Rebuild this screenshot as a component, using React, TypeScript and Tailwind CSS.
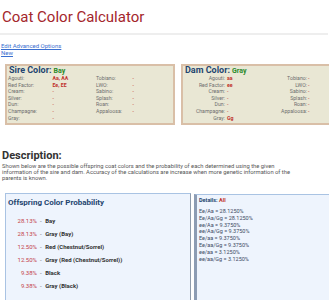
import React from "react";

const sireRows: [string, string, boolean, string, string][] = [
  ["Agouti:", "Aa, AA", true, "Tobiano:", "-"],
  ["Red Factor:", "Ee, EE", true, "LWO:", "-"],
  ["Cream:", "-", false, "Sabino:", "-"],
  ["Silver:", "-", false, "Splash:", "-"],
  ["Dun:", "-", false, "Roan:", "-"],
  ["Champagne:", "-", false, "Appaloosa:", "-"],
  ["Gray:", "-", false, "", ""],
];

const damRows: [string, string, boolean, string, string][] = [
  ["Agouti:", "aa", true, "Tobiano:", "-"],
  ["Red Factor:", "ee", true, "LWO:", "-"],
  ["Cream:", "-", false, "Sabino:", "-"],
  ["Silver:", "-", false, "Splash:", "-"],
  ["Dun:", "-", false, "Roan:", "-"],
  ["Champagne:", "-", false, "Appaloosa:", "-"],
  ["Gray:", "Gg", true, "", ""],
];

const offspring: [string, string][] = [
  ["28.13%", "Bay"],
  ["28.13%", "Gray (Bay)"],
  ["12.50%", "Red (Chestnut/Sorrel)"],
  ["12.50%", "Gray (Red (Chestnut/Sorrel))"],
  ["9.38%", "Black"],
  ["9.38%", "Gray (Black)"],
];

const details = [
  "Ee/Aa = 28.1250%",
  "Ee/Aa/Gg = 28.1250%",
  "ee/Aa = 9.3750%",
  "ee/Aa/Gg = 9.3750%",
  "Ee/aa = 9.3750%",
  "Ee/aa/Gg = 9.3750%",
  "ee/aa = 3.1250%",
  "ee/aa/Gg = 3.1250%",
];

function GeneBox({
  title,
  color,
  rows,
  cols,
  right,
  boxClass,
}: {
  title: string;
  color: string;
  rows: [string, string, boolean, string, string][];
  cols: string;
  right: boolean;
  boxClass: string;
}) {
  const lab = right ? "text-[#6e6e6e] text-right pr-[1px]" : "text-[#6e6e6e]";
  return (
    <div className={`h-[61px] border-2 border-[#d9bfa7] bg-[#e9e7d4] px-[1px] ${boxClass}`}>
      <div className="h-[9px] flex items-baseline leading-[9px] pl-[1px]">
        <span className="text-[9px] font-bold text-[#24456f]">{title}</span>
        <span className="ml-[2px] text-[7px] font-bold text-[#2a8a2a]">{color}</span>
      </div>
      <div className={`grid ${cols} auto-rows-[6.6px] text-[5.2px] leading-[6.6px]`}>
        {rows.map((r, i) => (
          <React.Fragment key={i}>
            <div className={lab}>{r[0]}</div>
            <div className={r[2] ? "text-[#c0302b] font-bold pl-[1px]" : "text-[#c0302b] pl-[1px]"}>{r[1]}</div>
            <div className={lab}>{r[3]}</div>
            <div className="text-[#c0302b]">{r[4]}</div>
          </React.Fragment>
        ))}
      </div>
    </div>
  );
}

export default function App() {
  return (
    <div className="w-[329px] h-[300px] overflow-hidden bg-white font-['Roboto','Liberation_Sans',sans-serif]">
      <div className="pl-[2px] pt-[8px] text-[15px] leading-[18px] text-[#a4262c]">
        Coat Color Calculator
      </div>
      <div className="mt-[7px] mr-[1px] h-[2px] bg-[#eeeeee]" />
      <div className="mt-[7px] pl-[1px] text-[6px] leading-[7px] text-[#3a6fd0]">
        <div className="underline">Edit Advanced Options</div>
        <div className="underline">New</div>
      </div>

      <div className="mt-[8px] grid grid-cols-[170px_1fr] gap-[6px] pl-[5px]">
        <GeneBox title="Sire Color:" color="Bay" rows={sireRows} cols="grid-cols-[43.5px_44.5px_36.5px_1fr]" right={false} boxClass="" />
        <GeneBox title="Dam Color:" color="Gray" rows={damRows} cols="grid-cols-[42px_40px_42px_1fr]" right={true} boxClass="border-r-0" />
      </div>

      <div className="mt-[25px] pl-[2px] text-[11px] leading-[12px] font-bold text-[#333333]">
        Description:
      </div>
      <p className="mt-[1px] pl-[2px] w-[304px] text-[5.8px] leading-[6.2px] text-[#555555]">
        Shown below are the possible offspring coat colors and the probability of each determined using the given
        information of the sire and dam. Accuracy of the calculations are increase when more genetic information of
        the parents is known.
      </p>

      <div className="mt-[11px] grid grid-cols-[186px_1fr] gap-[3px] pl-[5px] items-start">
        <div className="h-[120px] border border-[#a9c3e3] border-r-[#8e9bab] bg-[#eef4fd]">
          <div className="pt-[4px] pl-[2px] text-[8px] leading-[10px] font-bold text-[#24456f]">
            Offspring Color Probability
          </div>
          <ul className="mt-[6px]">
            {offspring.map(([p, n], i) => (
              <li key={i} className="flex h-[13px] items-center text-[6px] leading-[13px]">
                <span className="w-[31px] text-right text-[#c4424a]">{p}</span>
                <span className="ml-[3px] text-[#666666]">-</span>
                <span className="ml-[3.5px] font-bold text-[#333333]">{n}</span>
              </li>
            ))}
          </ul>
        </div>
        <div className="mt-[1px] h-[120px] border border-r-0 border-[#a9c3e3] border-l-[3px] border-l-[#8c9cb3] bg-[#eef4fd] pl-[2px] pt-[2px]">
          <div className="text-[5.5px] leading-[6.6px] font-bold text-[#24456f]">
            Details: <span className="text-[#c0302b]">All</span>
          </div>
          <div className="mt-[4.8px] text-[5.5px] leading-[6.8px] text-[#3d4a63]">
            {details.map((d, i) => (
              <div key={i}>{d}</div>
            ))}
          </div>
        </div>
      </div>
    </div>
  );
}
